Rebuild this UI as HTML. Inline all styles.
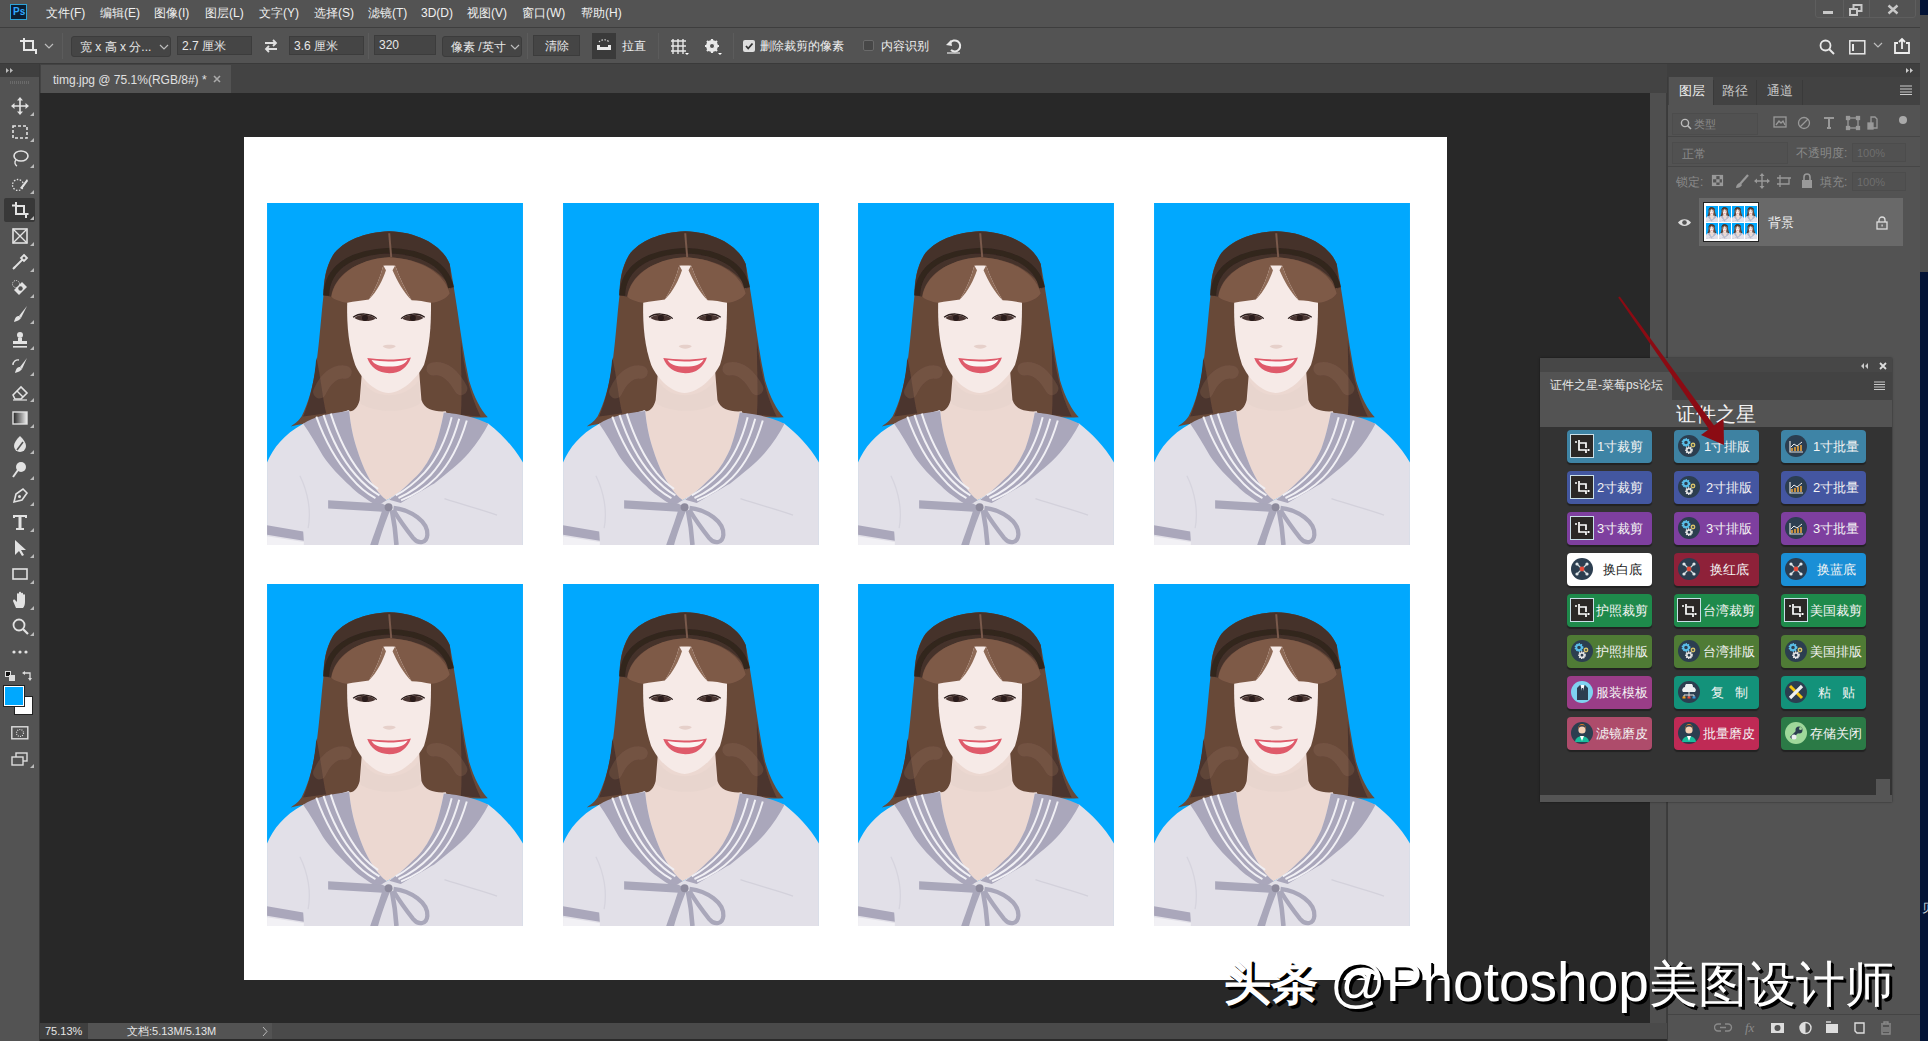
<!DOCTYPE html>
<html><head><meta charset="utf-8">
<style>
*{margin:0;padding:0;box-sizing:border-box}
html,body{width:1928px;height:1041px;overflow:hidden;background:#535353;font-family:"Liberation Sans",sans-serif;color:#e6e6e6;position:relative}
.a{position:absolute}
.t{position:absolute;white-space:nowrap;line-height:1}
#desk{left:1920px;top:0;width:8px;height:1041px;background:#041436}
#menubar{left:0;top:0;width:1920px;height:28px;background:#535353;border-bottom:1px solid #3e3e3e}
.mi{top:7px;font-size:12px;color:#f0f0f0}
#optbar{left:0;top:28px;width:1920px;height:36px;background:#535353;border-bottom:1px solid #3a3a3a}
.inp{position:absolute;background:#454545;border:1px solid #3c3c3c;font-size:12px;color:#e8e8e8;white-space:nowrap;line-height:18px;padding-left:4px}
.sep{position:absolute;top:33px;width:1px;height:26px;background:#484848;border-right:1px solid #5c5c5c}
#toolbar{left:0;top:64px;width:41px;height:977px;background:#535353;border-right:2px solid #3a3a3a}
#tabbar{left:40px;top:64px;width:1627px;height:29px;background:#434343}
#canvasbg{left:40px;top:93px;width:1610px;height:930px;background:#282828}
#gutter{left:1650px;top:93px;width:17px;height:930px;background:#4f4f4f;border-right:1px solid #3d3d3d}
#status{left:40px;top:1023px;width:1627px;height:18px;background:#4a4a4a;border-bottom:2px solid #2a2a2a}
#dock{left:1667px;top:64px;width:253px;height:977px;background:#535353;border-left:1px solid #3b3b3b}
#doc{left:244px;top:137px;width:1203px;height:843px;background:#fff}
.ph{position:absolute;width:256px;height:342px;overflow:hidden}
.ph svg{display:block}
.btn{position:absolute;width:85px;height:33px;border-radius:4px;box-shadow:0 2px 1px rgba(0,0,0,.35)}
.btn .ic{position:absolute;left:3px;top:4px;width:25px;height:25px;border-radius:50%;background:#2c3e50}
.btn .sq{position:absolute;left:3px;top:4px;width:24px;height:24px;background:#2b2826;border:1px solid #c9dfe8}
.btn .bt{position:absolute;top:10px;font-size:13px;color:#fff;white-space:nowrap;line-height:1}
.ticon{position:absolute;left:11px;width:18px;height:18px}
</style></head><body>
<svg width="0" height="0" style="position:absolute"><defs><symbol id="girl" viewBox="0 0 779 1041">
<filter id="sb" x="0" y="0" width="1" height="1"><feGaussianBlur stdDeviation="2.2"/></filter><rect width="779" height="1041" fill="#01a8fe"/><g filter="url(#sb)">
<path d="M370 86 C300 88 230 115 200 160 C178 195 172 240 172 280 C165 340 160 420 150 490 C140 560 125 610 105 650 C95 665 80 675 72 680 C120 670 200 655 262 640 L500 640 C560 650 620 655 672 652 C650 630 630 590 615 540 C600 470 590 400 580 330 C572 280 565 230 556 186 C535 130 460 88 370 86 Z" fill="#674839"/>
<path d="M150 470 C145 540 130 600 110 650 L180 640 C170 600 165 540 150 470 Z M590 420 C600 500 615 580 650 650 L590 645 C595 580 590 500 590 420 Z" fill="#4b342d"/>
<path d="M160 575 C180 530 210 510 238 515 M505 505 C535 500 565 520 590 565" fill="none" stroke="#98745f" stroke-width="40" stroke-linecap="round" opacity="0.25"/>
<path d="M372 86 C300 88 230 115 200 160 C180 195 172 240 172 280 L195 285 C205 225 260 175 372 165 C470 170 535 210 560 262 L562 250 C560 220 558 200 556 186 C535 130 460 88 372 86 Z" fill="#45332c"/>
<path d="M180 282 C183 200 250 150 372 145 C470 148 545 185 560 258" fill="none" stroke="#33251f" stroke-width="18"/>
<path d="M372 92 C374 120 376 140 378 165" fill="none" stroke="#7a5a4c" stroke-width="6"/>
<path d="M290 500 L462 500 L470 600 C480 630 510 636 545 634 C530 720 500 800 445 845 C420 870 395 890 364 905 C330 885 300 850 280 800 C262 740 250 680 245 630 C255 640 275 630 282 600 Z" fill="#ecd8d1"/><path d="M290 540 C320 600 420 600 462 540 L466 610 C420 640 330 640 284 610 Z" fill="#e8d5ce"/>
<path d="M244 300 C242 380 250 440 268 492 C290 540 330 575 370 578 C410 575 452 540 478 492 C494 440 500 380 499 300 C480 220 430 190 372 188 C310 190 262 220 244 300 Z" fill="#f6eae7"/>
<path d="M196 285 C205 225 270 170 372 165 C470 170 540 215 556 275 C548 290 525 302 499 304 C480 300 460 296 440 296 C420 262 402 225 390 190 L354 190 C345 225 330 262 310 294 C290 297 265 300 244 304 C225 300 205 295 196 285 Z" fill="#7e5a47"/>
<path d="M354 190 C345 225 330 262 310 294 C335 270 352 235 362 205 Z M390 190 C402 225 420 262 440 296 C415 272 395 235 382 205 Z" fill="#8e6a56"/>
<path d="M266 350 C280 338 312 336 330 352 C315 362 282 362 266 350 Z M412 352 C430 336 462 338 476 350 C460 362 428 362 412 352 Z" fill="#4a3530"/><circle cx="298" cy="350" r="9" fill="#2a1c1a"/><circle cx="444" cy="350" r="9" fill="#2a1c1a"/>
<path d="M262 348 C280 334 315 334 334 352 M408 352 C427 334 462 334 480 348" fill="none" stroke="#2a1c1a" stroke-width="4"/>
<path d="M352 436 C360 446 384 446 392 436 C385 430 360 430 352 436 Z" fill="#e6d0ca"/>
<path d="M305 472 C345 478 400 478 438 470 C428 500 405 518 372 518 C338 518 315 500 305 472 Z" fill="#df5a6a"/>
<path d="M318 478 C350 484 398 484 428 476 C420 492 402 498 372 498 C342 498 326 492 318 478 Z" fill="#fbf5f3"/>
<path d="M0 790 C20 745 50 705 110 672 L250 630 C255 680 262 727 297 811 C320 860 345 890 364 905 C400 885 420 865 445 841 C470 820 490 790 509 748 C520 720 530 680 538 636 L674 672 C710 700 750 740 779 790 L779 1041 L0 1041 Z" fill="#e2e0e8"/>
<path d="M110 672 C140 650 200 638 250 633 C255 680 262 727 297 811 C320 860 345 890 364 905 L335 922 C300 900 270 880 254 862 C220 830 190 800 170 769 C150 735 130 700 110 672 Z" fill="#aaa7bb"/>
<path d="M674 672 C640 655 590 642 538 638 C530 680 520 720 509 748 C490 790 470 820 445 841 C420 865 400 885 372 903 L407 913 C440 895 480 870 509 854 C550 820 590 790 614 761 C640 730 660 700 674 672 Z" fill="#aaa7bb"/>
<path d="M150 650 C175 720 215 790 255 835 C280 865 305 885 330 898 M172 645 C195 715 232 785 270 828 C295 857 318 876 342 890 M194 641 C216 710 250 778 285 822 C305 846 322 860 338 870" stroke="#f1f0f5" stroke-width="6" fill="none"/>
<path d="M562 652 C545 720 515 780 480 820 C450 852 420 875 392 890 M585 657 C566 725 535 788 498 828 C468 860 436 882 400 898 M608 662 C588 730 555 795 515 836 C485 866 450 888 408 905" stroke="#f1f0f5" stroke-width="6" fill="none"/>
<path d="M186 905 L350 915 L370 925 L352 940 L186 930 Z" fill="#a9a7ba"/>
<path d="M352 930 C340 970 325 1010 314 1041 L338 1041 C348 1005 362 965 375 935 Z" fill="#a9a7ba"/>
<path d="M385 928 C440 935 490 970 488 1010 C486 1035 462 1040 445 1020 C425 995 400 960 385 935" fill="none" stroke="#a9a7ba" stroke-width="13"/>
<path d="M380 935 C388 975 392 1010 394 1041" fill="none" stroke="#a9a7ba" stroke-width="14"/>
<circle cx="370" cy="926" r="12" fill="#8d8a9c"/>
<path d="M0 981 L110 1000 L112 1028 L0 1010 Z" fill="#aaa7bb"/>
<path d="M0 1014 L112 1032 L112 1041 L0 1041 Z" fill="#f2f1f5"/>
<path d="M540 900 C600 920 660 935 700 950" fill="none" stroke="#d3d1db" stroke-width="4"/>
<path d="M100 830 C125 880 135 940 125 990" fill="none" stroke="#d6d4de" stroke-width="4"/>
</g></symbol>
</defs></svg>
<div id="desk" class="a"></div><span class="t" style="left:1922px;top:902px;font-size:12px;color:#cfd8dc">贝</span>
<div class="a" style="left:1920px;top:15px;width:8px;height:257px;background:#4d4d4d"></div>
<div id="menubar" class="a">
<div class="a" style="left:10px;top:4px;width:17px;height:16px;background:#0b1f33;border:1px solid #2fa3d8"><span class="t" style="left:2px;top:2px;font-size:10px;color:#31a8ff;font-weight:bold">Ps</span></div>
<span class="t mi" style="left:46px">文件(F)</span>
<span class="t mi" style="left:100px">编辑(E)</span>
<span class="t mi" style="left:154px">图像(I)</span>
<span class="t mi" style="left:205px">图层(L)</span>
<span class="t mi" style="left:259px">文字(Y)</span>
<span class="t mi" style="left:314px">选择(S)</span>
<span class="t mi" style="left:368px">滤镜(T)</span>
<span class="t mi" style="left:421px">3D(D)</span>
<span class="t mi" style="left:467px">视图(V)</span>
<span class="t mi" style="left:522px">窗口(W)</span>
<span class="t mi" style="left:581px">帮助(H)</span>
<div class="a" style="left:1815px;top:-3px;width:101px;height:21px;border:1px solid #5e5e5e;border-radius:3px"></div>
<div class="a" style="left:1843px;top:0;width:1px;height:18px;background:#5e5e5e"></div><div class="a" style="left:1869px;top:0;width:1px;height:18px;background:#5e5e5e"></div>
<div class="a" style="left:1823px;top:11px;width:10px;height:3px;background:#c8c8c8"></div>
<svg class="a" style="left:1849px;top:4px" width="14" height="12"><rect x="4.5" y="1" width="8" height="6" fill="none" stroke="#c8c8c8" stroke-width="2"/><rect x="1" y="5" width="7" height="6" fill="#535353" stroke="#c8c8c8" stroke-width="2"/></svg>
<svg class="a" style="left:1887px;top:4px" width="12" height="11"><path d="M1.5 1.5L10.5 9.5M10.5 1.5L1.5 9.5" stroke="#c8c8c8" stroke-width="2.4"/></svg>
</div>
<div id="optbar" class="a">
<svg class="a" style="left:19px;top:9px" width="20" height="18"><path d="M1 4H4M5 1V13H17V17M5 4H14V13" fill="none" stroke="#e8e8e8" stroke-width="2"/></svg>
<svg class="a" style="left:44px;top:15px" width="10" height="6"><path d="M1 1L5 5L9 1" fill="none" stroke="#bdbdbd" stroke-width="1.2"/></svg>
<div class="sep" style="left:62px;top:5px"></div>
<div class="inp" style="left:71px;top:8px;width:100px;height:21px;border-radius:3px;padding-left:8px;line-height:20px">宽 x 高 x 分...</div>
<svg class="a" style="left:159px;top:16px" width="10" height="6"><path d="M1 1L5 5L9 1" fill="none" stroke="#bdbdbd" stroke-width="1.2"/></svg>
<div class="inp" style="left:177px;top:8px;width:75px;height:19px">2.7 厘米</div>
<svg class="a" style="left:263px;top:11px" width="16" height="14"><path d="M2 4H13M10 1L13 4L10 7M14 10H3M6 7L3 10L6 13" fill="none" stroke="#e0e0e0" stroke-width="1.8"/></svg>
<div class="inp" style="left:289px;top:8px;width:75px;height:19px">3.6 厘米</div>
<div class="sep" style="left:368px;top:5px"></div>
<div class="inp" style="left:374px;top:7px;width:62px;height:20px">320</div>
<div class="inp" style="left:442px;top:8px;width:80px;height:21px;border-radius:3px;padding-left:8px;line-height:21px">像素 /英寸</div>
<svg class="a" style="left:510px;top:16px" width="10" height="6"><path d="M1 1L5 5L9 1" fill="none" stroke="#bdbdbd" stroke-width="1.2"/></svg>
<div class="sep" style="left:527px;top:5px"></div>
<div class="inp" style="left:533px;top:7px;width:47px;height:21px;text-align:center;padding-left:0;line-height:20px">清除</div>
<div class="a" style="left:592px;top:5px;width:24px;height:26px;background:#3a3a3a"></div>
<svg class="a" style="left:595px;top:10px" width="18" height="14"><path d="M4 4A6 5 0 0 1 14 4" fill="none" stroke="#ddd" stroke-width="1.2" stroke-dasharray="1.5 1.5"/><path d="M2 7V12H16V7H13V9H5V7Z" fill="#e8e8e8"/></svg>
<span class="t" style="left:622px;top:12px;font-size:12px;color:#eee">拉直</span>
<div class="sep" style="left:658px;top:5px"></div>
<svg class="a" style="left:670px;top:10px" width="20" height="18"><path d="M3 1V16M8 1V16M13 1V16M1 3H16M1 8H16M1 13H16" stroke="#e8e8e8" stroke-width="1.4"/><path d="M15 15L19 15L17 17Z" fill="#fff"/></svg>
<svg class="a" style="left:704px;top:10px" width="20" height="18"><circle cx="8" cy="8" r="4.5" fill="none" stroke="#e8e8e8" stroke-width="3"/><path d="M8 1V15M1 8H15M3 3L13 13M13 3L3 13" stroke="#e8e8e8" stroke-width="2.2"/><circle cx="8" cy="8" r="2" fill="#535353"/><path d="M14 15L18 15L16 17Z" fill="#fff"/></svg>
<div class="sep" style="left:733px;top:5px"></div>
<div class="a" style="left:743px;top:12px;width:12px;height:12px;background:#dedede;border-radius:2px"></div>
<svg class="a" style="left:744px;top:13px" width="10" height="10"><path d="M2 5L4.2 7.5L8.5 2.5" fill="none" stroke="#333" stroke-width="1.8"/></svg>
<span class="t" style="left:760px;top:12px;font-size:12px;color:#eee">删除裁剪的像素</span>
<div class="a" style="left:863px;top:12px;width:11px;height:11px;background:#474747;border:1px solid #6a6a6a;border-radius:2px"></div>
<span class="t" style="left:881px;top:12px;font-size:12px;color:#eee">内容识别</span>
<svg class="a" style="left:945px;top:10px" width="18" height="17"><path d="M5 5A5.5 5.5 0 1 1 6 12" fill="none" stroke="#e8e8e8" stroke-width="2"/><path d="M1 7L6 2L7 8Z" fill="#e8e8e8"/><path d="M2 15H15" stroke="#e8e8e8" stroke-width="1.2"/></svg>
<svg class="a" style="left:1819px;top:11px" width="17" height="17"><circle cx="6.5" cy="6.5" r="5" fill="none" stroke="#e8e8e8" stroke-width="1.8"/><path d="M10 10L15 15" stroke="#e8e8e8" stroke-width="2"/></svg>
<svg class="a" style="left:1849px;top:12px" width="17" height="15"><rect x="0.8" y="0.8" width="15" height="13" fill="none" stroke="#e8e8e8" stroke-width="1.5"/><rect x="3" y="4" width="2" height="7" fill="#e8e8e8"/></svg>
<svg class="a" style="left:1873px;top:14px" width="10" height="6"><path d="M1 1L5 5L9 1" fill="none" stroke="#bdbdbd" stroke-width="1.2"/></svg>
<svg class="a" style="left:1893px;top:9px" width="18" height="18"><path d="M5 6H2V16H16V6H13" fill="none" stroke="#eee" stroke-width="1.8"/><path d="M9 12V2M6 5L9 2L12 5" fill="none" stroke="#eee" stroke-width="1.8"/></svg>
</div>
<div id="toolbar" class="a">
<div class="a" style="left:0;top:0;width:39px;height:13px;background:#3f3f3f"></div>
<svg class="a" style="left:5px;top:3px" width="10" height="7"><path d="M1 1L4 3.5L1 6ZM5 1L8 3.5L5 6Z" fill="#bbb"/></svg>
<div class="a" style="left:10px;top:17px;width:19px;height:3px;background:repeating-linear-gradient(90deg,#6a6a6a 0 1px,transparent 1px 2px)"></div>
<div class="a" style="left:4px;top:134px;width:31px;height:24px;background:#383838;border-radius:2px"></div>
<svg class="a" style="left:11px;top:33px" width="18" height="18"><path d="M9 1V17M1 9H17" stroke="#e2e2e2" stroke-width="1.6"/><path d="M9 0L6 3.5H12ZM9 18L6 14.5H12ZM0 9L3.5 6V12ZM18 9L14.5 6V12Z" fill="#e2e2e2"/></svg><svg class="a" style="left:30px;top:48px" width="4" height="4"><path d="M4 0V4H0Z" fill="#bbb"/></svg><svg class="a" style="left:11px;top:59px" width="18" height="18"><rect x="2" y="3" width="14" height="12" fill="none" stroke="#e2e2e2" stroke-width="1.6" stroke-dasharray="3 2"/></svg><svg class="a" style="left:30px;top:74px" width="4" height="4"><path d="M4 0V4H0Z" fill="#bbb"/></svg><svg class="a" style="left:11px;top:85px" width="18" height="18"><ellipse cx="10" cy="7" rx="7" ry="5" fill="none" stroke="#e2e2e2" stroke-width="1.6"/><path d="M5 11C3 13 4 16 6 17" fill="none" stroke="#e2e2e2" stroke-width="1.4"/></svg><svg class="a" style="left:30px;top:100px" width="4" height="4"><path d="M4 0V4H0Z" fill="#bbb"/></svg><svg class="a" style="left:11px;top:111px" width="18" height="18"><circle cx="7" cy="10" r="5.5" fill="none" stroke="#e2e2e2" stroke-width="1.3" stroke-dasharray="1.5 1.5"/><path d="M9 13L16 4L17 6L11 14Z" fill="#e2e2e2"/></svg><svg class="a" style="left:30px;top:126px" width="4" height="4"><path d="M4 0V4H0Z" fill="#bbb"/></svg><svg class="a" style="left:11px;top:137px" width="18" height="18"><path d="M1 4.5H4M5 1V13H15V17M5 5H13V13" fill="none" stroke="#e2e2e2" stroke-width="2"/><rect x="15.5" y="12" width="2" height="2" fill="#e2e2e2"/></svg><svg class="a" style="left:30px;top:152px" width="4" height="4"><path d="M4 0V4H0Z" fill="#bbb"/></svg><svg class="a" style="left:11px;top:163px" width="18" height="18"><rect x="2" y="2" width="14" height="14" fill="none" stroke="#e2e2e2" stroke-width="1.6"/><path d="M2 2L16 16M16 2L2 16" stroke="#e2e2e2" stroke-width="1.4"/></svg><svg class="a" style="left:30px;top:178px" width="4" height="4"><path d="M4 0V4H0Z" fill="#bbb"/></svg><svg class="a" style="left:11px;top:189px" width="18" height="18"><path d="M3 15L11 7M13 2L16 5L13 8L10 5Z" fill="none" stroke="#e2e2e2" stroke-width="1.8"/><path d="M2 16L4 14" stroke="#e2e2e2" stroke-width="2"/></svg><svg class="a" style="left:30px;top:204px" width="4" height="4"><path d="M4 0V4H0Z" fill="#bbb"/></svg><svg class="a" style="left:11px;top:215px" width="18" height="18"><path d="M3 11L11 3L16 8L8 16Z" fill="#e2e2e2"/><circle cx="9.5" cy="9.5" r="2.2" fill="#535353"/><circle cx="5" cy="5" r="3.5" fill="none" stroke="#e2e2e2" stroke-width="1" stroke-dasharray="1 1"/></svg><svg class="a" style="left:30px;top:230px" width="4" height="4"><path d="M4 0V4H0Z" fill="#bbb"/></svg><svg class="a" style="left:11px;top:241px" width="18" height="18"><path d="M16 1L8 11L10 13Z" fill="#e2e2e2"/><path d="M8 11C5 11 4 13 3 17C6 16 9 15 10 13Z" fill="#e2e2e2"/></svg><svg class="a" style="left:30px;top:256px" width="4" height="4"><path d="M4 0V4H0Z" fill="#bbb"/></svg><svg class="a" style="left:11px;top:267px" width="18" height="18"><circle cx="9" cy="4" r="3" fill="#e2e2e2"/><path d="M7 7H11V10H16V13H2V10H7Z" fill="#e2e2e2"/><rect x="2" y="15" width="14" height="1.6" fill="#e2e2e2"/></svg><svg class="a" style="left:30px;top:282px" width="4" height="4"><path d="M4 0V4H0Z" fill="#bbb"/></svg><svg class="a" style="left:11px;top:293px" width="18" height="18"><path d="M16 1L9 10L11 12Z" fill="#e2e2e2"/><path d="M9 10C6 10 5 12 4 16C7 15 10 14 11 12Z" fill="#e2e2e2"/><path d="M2 8A5 5 0 0 1 8 3" fill="none" stroke="#e2e2e2" stroke-width="1.4"/></svg><svg class="a" style="left:30px;top:308px" width="4" height="4"><path d="M4 0V4H0Z" fill="#bbb"/></svg><svg class="a" style="left:11px;top:319px" width="18" height="18"><path d="M2 12L10 4L16 10L10 16H4Z" fill="none" stroke="#e2e2e2" stroke-width="1.6"/><path d="M6 8L12 14" stroke="#e2e2e2" stroke-width="1.4"/><path d="M2 17H16" stroke="#e2e2e2" stroke-width="1.2"/></svg><svg class="a" style="left:30px;top:334px" width="4" height="4"><path d="M4 0V4H0Z" fill="#bbb"/></svg><svg class="a" style="left:11px;top:345px" width="18" height="18"><defs><linearGradient id="gr"><stop offset="0" stop-color="#222"/><stop offset="1" stop-color="#eee"/></linearGradient></defs><rect x="2" y="3" width="14" height="12" fill="url(#gr)" stroke="#e2e2e2" stroke-width="1.4"/></svg><svg class="a" style="left:30px;top:360px" width="4" height="4"><path d="M4 0V4H0Z" fill="#bbb"/></svg><svg class="a" style="left:11px;top:371px" width="18" height="18"><path d="M9 1C5 5 3 8 3 11A6 6 0 0 0 15 11C15 8 13 5 9 1Z" fill="#e2e2e2"/><path d="M6 15L12 7" stroke="#535353" stroke-width="1.5"/></svg><svg class="a" style="left:30px;top:386px" width="4" height="4"><path d="M4 0V4H0Z" fill="#bbb"/></svg><svg class="a" style="left:11px;top:397px" width="18" height="18"><circle cx="10" cy="6" r="5" fill="#e2e2e2"/><path d="M7 9L2 16" stroke="#e2e2e2" stroke-width="2"/></svg><svg class="a" style="left:30px;top:412px" width="4" height="4"><path d="M4 0V4H0Z" fill="#bbb"/></svg><svg class="a" style="left:11px;top:423px" width="18" height="18"><path d="M3 15L5 7L12 2L16 6L11 13Z" fill="none" stroke="#e2e2e2" stroke-width="1.6"/><circle cx="8.5" cy="9.5" r="1.5" fill="#e2e2e2"/></svg><svg class="a" style="left:30px;top:438px" width="4" height="4"><path d="M4 0V4H0Z" fill="#bbb"/></svg><svg class="a" style="left:11px;top:449px" width="18" height="18"><path d="M2 2H16V5H14V4H10.5V15H13V17H5V15H7.5V4H4V5H2Z" fill="#e2e2e2"/></svg><svg class="a" style="left:30px;top:464px" width="4" height="4"><path d="M4 0V4H0Z" fill="#bbb"/></svg><svg class="a" style="left:11px;top:475px" width="18" height="18"><path d="M4 1V16L8 12L11 17L13 16L10 11H15Z" fill="#e2e2e2"/></svg><svg class="a" style="left:30px;top:490px" width="4" height="4"><path d="M4 0V4H0Z" fill="#bbb"/></svg><svg class="a" style="left:11px;top:501px" width="18" height="18"><rect x="2" y="4" width="14" height="10" fill="none" stroke="#e2e2e2" stroke-width="1.6"/></svg><svg class="a" style="left:30px;top:516px" width="4" height="4"><path d="M4 0V4H0Z" fill="#bbb"/></svg><svg class="a" style="left:11px;top:527px" width="18" height="18"><path d="M5 17L2 10C2 9 3 8 4 9L6 11V3C6 2 8 2 8 3V8V1.5C8 0.5 10 0.5 10 1.5V8V2.5C10 1.5 12 1.5 12 2.5V8V4C12 3 14 3 14 4V11C14 14 13 16 12 17Z" fill="#e2e2e2"/></svg><svg class="a" style="left:30px;top:542px" width="4" height="4"><path d="M4 0V4H0Z" fill="#bbb"/></svg><svg class="a" style="left:11px;top:553px" width="18" height="18"><circle cx="8" cy="8" r="5.5" fill="none" stroke="#e2e2e2" stroke-width="1.8"/><path d="M12 12L17 17" stroke="#e2e2e2" stroke-width="2.2"/></svg><svg class="a" style="left:30px;top:568px" width="4" height="4"><path d="M4 0V4H0Z" fill="#bbb"/></svg><svg class="a" style="left:11px;top:579px" width="18" height="18"><circle cx="3" cy="9" r="1.6" fill="#e2e2e2"/><circle cx="9" cy="9" r="1.6" fill="#e2e2e2"/><circle cx="15" cy="9" r="1.6" fill="#e2e2e2"/></svg><div class="a" style="left:5px;top:607px;width:6px;height:6px;background:#111;border:1px solid #ddd"></div><div class="a" style="left:9px;top:611px;width:6px;height:6px;background:#ddd"></div><svg class="a" style="left:22px;top:607px" width="10" height="10"><path d="M2 2H8V8" fill="none" stroke="#ddd" stroke-width="1.3"/><path d="M0 2L3 0V4ZM8 10L6 7H10Z" fill="#ddd"/></svg><div class="a" style="left:14px;top:632px;width:19px;height:19px;background:#fff;border:1px solid #222"></div><div class="a" style="left:4px;top:622px;width:20px;height:20px;background:#00a8fe;border:1px solid #fff;outline:1px solid #222"></div><svg class="a" style="left:11px;top:662px" width="18" height="14"><rect x="0.8" y="0.8" width="16" height="12" fill="none" stroke="#ddd" stroke-width="1.4"/><circle cx="9" cy="7" r="3.5" fill="none" stroke="#ddd" stroke-width="1.2" stroke-dasharray="1 1.2"/></svg><svg class="a" style="left:11px;top:688px" width="18" height="15"><rect x="5" y="1" width="11" height="8" fill="none" stroke="#ddd" stroke-width="1.4"/><rect x="1" y="5" width="11" height="8" fill="#535353" stroke="#ddd" stroke-width="1.4"/></svg><svg class="a" style="left:30px;top:700px" width="4" height="4"><path d="M4 0V4H0Z" fill="#bbb"/></svg>
</div>
<div id="tabbar" class="a">
<div class="a" style="left:1px;top:1px;width:190px;height:28px;background:#535353"></div>
<span class="t" style="left:13px;top:10px;font-size:12px;color:#e0e0e0">timg.jpg @ 75.1%(RGB/8#) *</span>
<svg class="a" style="left:173px;top:11px" width="8" height="8"><path d="M1 1L7 7M7 1L1 7" stroke="#aaa" stroke-width="1.6"/></svg>
</div>
<div id="canvasbg" class="a"></div>
<div id="gutter" class="a"></div>
<div id="status" class="a">
<div class="a" style="left:0;top:0;width:48px;height:16px;background:#3f3f3f"></div><div class="a" style="left:48px;top:0;width:184px;height:16px;background:#535353"></div>
<span class="t" style="left:5px;top:3px;font-size:11px;color:#e6e6e6">75.13%</span>
<span class="t" style="left:87px;top:3px;font-size:11px;color:#e6e6e6">文档:5.13M/5.13M</span>
<svg class="a" style="left:222px;top:3px" width="6" height="11"><path d="M1 1L5 5.5L1 10" fill="none" stroke="#bbb" stroke-width="1"/></svg>
</div>
<div id="dock" class="a"></div>
<div class="a" style="left:1667px;top:64px;width:253px;height:13px;background:#3f3f3f"></div>
<svg class="a" style="left:1905px;top:67px" width="10" height="7"><path d="M1 1L4 3.5L1 6ZM5 1L8 3.5L5 6Z" fill="#ccc"/></svg>
<div class="a" style="left:1668px;top:77px;width:252px;height:28px;background:#424242"></div>
<div class="a" style="left:1669px;top:77px;width:44px;height:28px;background:#535353"></div>
<div class="a" style="left:1713px;top:80px;width:1px;height:25px;background:#3a3a3a"></div><div class="a" style="left:1756px;top:80px;width:1px;height:25px;background:#3a3a3a"></div><div class="a" style="left:1802px;top:80px;width:1px;height:25px;background:#3a3a3a"></div>
<span class="t" style="left:1679px;top:84px;font-size:13px;color:#f0f0f0">图层</span>
<span class="t" style="left:1722px;top:84px;font-size:13px;color:#c8c8c8">路径</span>
<span class="t" style="left:1767px;top:84px;font-size:13px;color:#c8c8c8">通道</span>
<svg class="a" style="left:1900px;top:85px" width="12" height="10"><path d="M0 1H12M0 4H12M0 7H12M0 9.5H12" stroke="#ccc" stroke-width="1"/></svg>
<div class="a" style="left:1668px;top:136px;width:252px;height:1px;background:#464646"></div>
<div class="a" style="left:1672px;top:113px;width:86px;height:22px;border:1px solid #4c4c4c;background:#515151"></div>
<svg class="a" style="left:1680px;top:118px" width="12" height="12"><circle cx="5" cy="5" r="3.6" fill="none" stroke="#bbb" stroke-width="1.4"/><path d="M7.5 7.5L11 11" stroke="#bbb" stroke-width="1.6"/></svg>
<span class="t" style="left:1694px;top:119px;font-size:11px;color:#8a8a8a">类型</span>
<svg class="a" style="left:1773px;top:115px" width="140" height="17" fill="none" stroke="#999" stroke-width="1.3"><rect x="1" y="2" width="12" height="10"/><path d="M3 10L6 6L8 8L10 6L12 10" /><circle cx="31" cy="8" r="5.5"/><path d="M35 4L27 12" stroke="#999" stroke-width="1.3"/><path d="M51 3H61M56 3V13M54 13H58" stroke-width="2"/><rect x="75" y="3" width="10" height="10"/><rect x="73.5" y="1.5" width="3" height="3" fill="#999"/><rect x="83.5" y="1.5" width="3" height="3" fill="#999"/><rect x="73.5" y="11.5" width="3" height="3" fill="#999"/><rect x="83.5" y="11.5" width="3" height="3" fill="#999"/><path d="M98 2H102L104 4V13H98Z"/><rect x="95" y="8" width="5" height="6" fill="#999"/><circle cx="130" cy="5" r="4" fill="#aaa" stroke="none"/></svg>
<div class="a" style="left:1668px;top:166px;width:252px;height:1px;background:#464646"></div>
<div class="a" style="left:1672px;top:142px;width:116px;height:22px;border:1px solid #4c4c4c;background:#515151"></div>
<span class="t" style="left:1682px;top:148px;font-size:12px;color:#8a8a8a">正常</span>
<span class="t" style="left:1796px;top:147px;font-size:12px;color:#8a8a8a">不透明度:</span>
<div class="a" style="left:1852px;top:143px;width:54px;height:19px;border:1px solid #4c4c4c;background:#515151"></div>
<span class="t" style="left:1857px;top:148px;font-size:11px;color:#6e6e6e">100%</span>
<span class="t" style="left:1676px;top:176px;font-size:12px;color:#8a8a8a">锁定:</span>
<svg class="a" style="left:1711px;top:173px" width="105" height="16" fill="#999"><rect x="1.5" y="2.5" width="10" height="10" fill="none" stroke="#999" stroke-width="1.2"/><path d="M2 3H5.3V6.3H2ZM8.6 3H11V6.3H8.6ZM5.3 6.3H8.6V9.6H5.3ZM2 9.6H5.3V12H2ZM8.6 9.6H11V12H8.6Z" fill="#999"/><path d="M29 11L37 2" stroke="#999" stroke-width="2.2"/><path d="M25 15C25 12 27 10 29 10L31 12C30 14 28 15 25 15Z" fill="#999"/><path d="M51 2V14M45 8H57" stroke="#999" stroke-width="1.4"/><path d="M51 0L48.5 3H53.5ZM51 16L48.5 13H53.5ZM43 8L46 5.5V10.5ZM59 8L56 5.5V10.5Z" fill="#999"/><path d="M66 5H80M69 2V14M66 11H78V5" fill="none" stroke="#999" stroke-width="1.3"/><rect x="91" y="7" width="10" height="8"/><path d="M93 7V4A3 3 0 0 1 99 4V7" fill="none" stroke="#999" stroke-width="1.6"/></svg>
<span class="t" style="left:1820px;top:176px;font-size:12px;color:#8a8a8a">填充:</span>
<div class="a" style="left:1852px;top:172px;width:54px;height:19px;border:1px solid #4c4c4c;background:#515151"></div>
<span class="t" style="left:1857px;top:177px;font-size:11px;color:#6e6e6e">100%</span>
<div class="a" style="left:1668px;top:197px;width:252px;height:49px;background:#535353"></div>
<div class="a" style="left:1699px;top:198px;width:204px;height:48px;background:#696969"></div>
<svg class="a" style="left:1677px;top:217px" width="15" height="11"><path d="M1 5.5C4 1 11 1 14 5.5C11 10 4 10 1 5.5Z" fill="#ddd"/><circle cx="7.5" cy="5.5" r="2.3" fill="#535353"/></svg>
<div class="a" style="left:1703px;top:202px;width:56px;height:40px;background:#fff;border:1px solid #222"></div>
<svg class="a" style="left:1706px;top:206px" width="12" height="16" viewBox="0 0 779 1041" preserveAspectRatio="none"><use href="#girl"/></svg><svg class="a" style="left:1719px;top:206px" width="12" height="16" viewBox="0 0 779 1041" preserveAspectRatio="none"><use href="#girl"/></svg><svg class="a" style="left:1732px;top:206px" width="12" height="16" viewBox="0 0 779 1041" preserveAspectRatio="none"><use href="#girl"/></svg><svg class="a" style="left:1745px;top:206px" width="12" height="16" viewBox="0 0 779 1041" preserveAspectRatio="none"><use href="#girl"/></svg><svg class="a" style="left:1706px;top:223px" width="12" height="16" viewBox="0 0 779 1041" preserveAspectRatio="none"><use href="#girl"/></svg><svg class="a" style="left:1719px;top:223px" width="12" height="16" viewBox="0 0 779 1041" preserveAspectRatio="none"><use href="#girl"/></svg><svg class="a" style="left:1732px;top:223px" width="12" height="16" viewBox="0 0 779 1041" preserveAspectRatio="none"><use href="#girl"/></svg><svg class="a" style="left:1745px;top:223px" width="12" height="16" viewBox="0 0 779 1041" preserveAspectRatio="none"><use href="#girl"/></svg>
<span class="t" style="left:1768px;top:216px;font-size:13px;color:#f0f0f0">背景</span>
<svg class="a" style="left:1876px;top:216px" width="12" height="14"><rect x="1" y="6" width="10" height="7" fill="none" stroke="#ddd" stroke-width="1.3"/><path d="M3 6V4A3 3 0 0 1 9 4V6" fill="none" stroke="#ddd" stroke-width="1.3"/><rect x="5.5" y="8.5" width="1.2" height="2" fill="#ddd"/></svg>
<div class="a" style="left:1668px;top:1014px;width:252px;height:1px;background:#444"></div>
<svg class="a" style="left:1714px;top:1019px" width="185" height="18" fill="none" stroke="#8a8a8a" stroke-width="1.4"><path d="M7 5H4A3.5 3.5 0 0 0 4 12H7M11 5H14A3.5 3.5 0 0 1 14 12H11M6 8.5H12"/><text x="31" y="13" font-family="Liberation Serif" font-style="italic" font-size="13" fill="#8a8a8a" stroke="none">fx</text><rect x="57" y="4" width="13" height="10" fill="#ddd" stroke="none"/><circle cx="63.5" cy="9" r="3" fill="#535353" stroke="none"/><circle cx="91.5" cy="9" r="5.5" stroke="#ddd"/><path d="M91.5 3.5A5.5 5.5 0 0 0 91.5 14.5Z" fill="#ddd" stroke="none"/><path d="M112 5H124V14H112Z" fill="#ddd" stroke="none"/><path d="M112 3H117" stroke="#ddd"/><path d="M141 4H150V14H143L141 12Z" stroke="#ddd"/><path d="M167 5H177M168 6V15H176V6M170 8V13M172 8V13M174 8V13M170 5V3H174V5"/></svg>
<div id="doc" class="a"></div>
<div class="ph" style="left:267px;top:203px"><svg width="256" height="342"><use href="#girl"/></svg></div>
<div class="ph" style="left:563px;top:203px"><svg width="256" height="342"><use href="#girl"/></svg></div>
<div class="ph" style="left:858px;top:203px"><svg width="256" height="342"><use href="#girl"/></svg></div>
<div class="ph" style="left:1154px;top:203px"><svg width="256" height="342"><use href="#girl"/></svg></div>
<div class="ph" style="left:267px;top:584px"><svg width="256" height="342"><use href="#girl"/></svg></div>
<div class="ph" style="left:563px;top:584px"><svg width="256" height="342"><use href="#girl"/></svg></div>
<div class="ph" style="left:858px;top:584px"><svg width="256" height="342"><use href="#girl"/></svg></div>
<div class="ph" style="left:1154px;top:584px"><svg width="256" height="342"><use href="#girl"/></svg></div>
<div class="a" style="left:1540px;top:358px;width:352px;height:444px;background:#333333;box-shadow:0 0 2px rgba(0,0,0,.5)"></div>
<div class="a" style="left:1540px;top:358px;width:352px;height:14px;background:#474747"></div>
<svg class="a" style="left:1860px;top:362px" width="30" height="9"><path d="M4 1L1 4L4 7ZM8 1L5 4L8 7Z" fill="#ccc"/><path d="M20 1L26 7M26 1L20 7" stroke="#ddd" stroke-width="1.8"/></svg>
<div class="a" style="left:1540px;top:372px;width:352px;height:28px;background:#434343"></div>
<div class="a" style="left:1540px;top:372px;width:132px;height:28px;background:#535353"></div>
<span class="t" style="left:1550px;top:379px;font-size:12px;color:#e8e8e8">证件之星-菜莓ps论坛</span>
<svg class="a" style="left:1874px;top:381px" width="11" height="9"><path d="M0 1H11M0 3.5H11M0 6H11M0 8.5H11" stroke="#ccc" stroke-width="1"/></svg>
<div class="a" style="left:1540px;top:400px;width:352px;height:27px;background:#535353"></div>
<span class="t" style="left:1676px;top:404px;font-size:20px;color:#f2f2f2">证件之星</span>
<div class="a" style="left:1876px;top:779px;width:14px;height:16px;background:#555"></div>
<div class="a" style="left:1540px;top:795px;width:352px;height:7px;background:#555555"></div>
<div class="btn" style="left:1567px;top:430px;background:#3e84a5"><div class="sq"></div><svg class="a" style="left:7px;top:9px" width="17" height="16"><path d="M1 3H3M5 1V11H12V14M6 4H12V9" fill="none" stroke="#fff" stroke-width="1.7"/><rect x="13.5" y="10" width="2" height="2" fill="#fff"/></svg><span class="bt" style="left:30px;color:#f4f4f4">1寸裁剪</span></div>
<div class="btn" style="left:1674px;top:430px;background:#3e82a2"><div class="ic" style="left:4px;top:5px;width:22px;height:22px"></div><svg class="a" style="left:5px;top:6px" width="20" height="20"><circle cx="7" cy="6.5" r="3.6" fill="none" stroke="#5bc0eb" stroke-width="1.6" stroke-dasharray="1.4 0.9"/><circle cx="7" cy="6.5" r="2.6" fill="none" stroke="#5bc0eb" stroke-width="1.6"/><circle cx="14" cy="9" r="2.4" fill="#d8c36a"/><circle cx="14" cy="9" r="1" fill="#2c3e50"/><circle cx="10" cy="14.2" r="3.1" fill="none" stroke="#e8e8e8" stroke-width="1.5" stroke-dasharray="1.3 0.9"/><circle cx="10" cy="14.2" r="2.2" fill="none" stroke="#e8e8e8" stroke-width="1.5"/></svg><span class="bt" style="left:30px;color:#f4f4f4">1寸排版</span></div>
<div class="btn" style="left:1781px;top:430px;background:#3e84a6"><div class="ic" style="left:4px;top:5px;width:22px;height:22px"></div><svg class="a" style="left:8px;top:10px" width="15" height="13"><path d="M1 1V12H14" fill="none" stroke="#ddd" stroke-width="1.2"/><path d="M3 11V8M6 11V7M9 11V6M12 11V5" stroke="#e9a23b" stroke-width="1.6"/><path d="M2 7L5 4L8 6L13 2" fill="none" stroke="#eee" stroke-width="1"/></svg><span class="bt" style="left:32px;color:#f4f4f4">1寸批量</span></div>
<div class="btn" style="left:1567px;top:471px;background:#4357a0"><div class="sq"></div><svg class="a" style="left:7px;top:9px" width="17" height="16"><path d="M1 3H3M5 1V11H12V14M6 4H12V9" fill="none" stroke="#fff" stroke-width="1.7"/><rect x="13.5" y="10" width="2" height="2" fill="#fff"/></svg><span class="bt" style="left:30px;color:#f4f4f4">2寸裁剪</span></div>
<div class="btn" style="left:1674px;top:471px;background:#4456a1"><div class="ic" style="left:4px;top:5px;width:22px;height:22px"></div><svg class="a" style="left:5px;top:6px" width="20" height="20"><circle cx="7" cy="6.5" r="3.6" fill="none" stroke="#5bc0eb" stroke-width="1.6" stroke-dasharray="1.4 0.9"/><circle cx="7" cy="6.5" r="2.6" fill="none" stroke="#5bc0eb" stroke-width="1.6"/><circle cx="14" cy="9" r="2.4" fill="#d8c36a"/><circle cx="14" cy="9" r="1" fill="#2c3e50"/><circle cx="10" cy="14.2" r="3.1" fill="none" stroke="#e8e8e8" stroke-width="1.5" stroke-dasharray="1.3 0.9"/><circle cx="10" cy="14.2" r="2.2" fill="none" stroke="#e8e8e8" stroke-width="1.5"/></svg><span class="bt" style="left:32px;color:#f4f4f4">2寸排版</span></div>
<div class="btn" style="left:1781px;top:471px;background:#4456a1"><div class="ic" style="left:4px;top:5px;width:22px;height:22px"></div><svg class="a" style="left:8px;top:10px" width="15" height="13"><path d="M1 1V12H14" fill="none" stroke="#ddd" stroke-width="1.2"/><path d="M3 11V8M6 11V7M9 11V6M12 11V5" stroke="#e9a23b" stroke-width="1.6"/><path d="M2 7L5 4L8 6L13 2" fill="none" stroke="#eee" stroke-width="1"/></svg><span class="bt" style="left:32px;color:#f4f4f4">2寸批量</span></div>
<div class="btn" style="left:1567px;top:512px;background:#7e3f9f"><div class="sq"></div><svg class="a" style="left:7px;top:9px" width="17" height="16"><path d="M1 3H3M5 1V11H12V14M6 4H12V9" fill="none" stroke="#fff" stroke-width="1.7"/><rect x="13.5" y="10" width="2" height="2" fill="#fff"/></svg><span class="bt" style="left:30px;color:#f4f4f4">3寸裁剪</span></div>
<div class="btn" style="left:1674px;top:512px;background:#7e3f9f"><div class="ic" style="left:4px;top:5px;width:22px;height:22px"></div><svg class="a" style="left:5px;top:6px" width="20" height="20"><circle cx="7" cy="6.5" r="3.6" fill="none" stroke="#5bc0eb" stroke-width="1.6" stroke-dasharray="1.4 0.9"/><circle cx="7" cy="6.5" r="2.6" fill="none" stroke="#5bc0eb" stroke-width="1.6"/><circle cx="14" cy="9" r="2.4" fill="#d8c36a"/><circle cx="14" cy="9" r="1" fill="#2c3e50"/><circle cx="10" cy="14.2" r="3.1" fill="none" stroke="#e8e8e8" stroke-width="1.5" stroke-dasharray="1.3 0.9"/><circle cx="10" cy="14.2" r="2.2" fill="none" stroke="#e8e8e8" stroke-width="1.5"/></svg><span class="bt" style="left:32px;color:#f4f4f4">3寸排版</span></div>
<div class="btn" style="left:1781px;top:512px;background:#7e3f9f"><div class="ic" style="left:4px;top:5px;width:22px;height:22px"></div><svg class="a" style="left:8px;top:10px" width="15" height="13"><path d="M1 1V12H14" fill="none" stroke="#ddd" stroke-width="1.2"/><path d="M3 11V8M6 11V7M9 11V6M12 11V5" stroke="#e9a23b" stroke-width="1.6"/><path d="M2 7L5 4L8 6L13 2" fill="none" stroke="#eee" stroke-width="1"/></svg><span class="bt" style="left:32px;color:#f4f4f4">3寸批量</span></div>
<div class="btn" style="left:1567px;top:553px;background:#ffffff"><div class="ic" style="left:4px;top:5px;width:22px;height:22px"></div><svg class="a" style="left:6px;top:7px" width="18" height="18"><path d="M9 9L4 4M9 9L14 4M9 9L4 14M9 9L14 14" stroke="#cfd8dc" stroke-width="1.2"/><circle cx="4" cy="4" r="1.6" fill="#dfe6e9"/><circle cx="14" cy="4" r="1.6" fill="#dfe6e9"/><circle cx="4" cy="14" r="1.6" fill="#dfe6e9"/><circle cx="14" cy="14" r="1.6" fill="#dfe6e9"/><circle cx="9" cy="9" r="2.4" fill="#e74c3c"/></svg><span class="bt" style="left:36px;color:#222">换白底</span></div>
<div class="btn" style="left:1674px;top:553px;background:#8e2139"><div class="ic" style="left:4px;top:5px;width:22px;height:22px"></div><svg class="a" style="left:6px;top:7px" width="18" height="18"><path d="M9 9L4 4M9 9L14 4M9 9L4 14M9 9L14 14" stroke="#cfd8dc" stroke-width="1.2"/><circle cx="4" cy="4" r="1.6" fill="#dfe6e9"/><circle cx="14" cy="4" r="1.6" fill="#dfe6e9"/><circle cx="4" cy="14" r="1.6" fill="#dfe6e9"/><circle cx="14" cy="14" r="1.6" fill="#dfe6e9"/><circle cx="9" cy="9" r="2.4" fill="#e74c3c"/></svg><span class="bt" style="left:36px;color:#f4f4f4">换红底</span></div>
<div class="btn" style="left:1781px;top:553px;background:#1a8fd6"><div class="ic" style="left:4px;top:5px;width:22px;height:22px"></div><svg class="a" style="left:6px;top:7px" width="18" height="18"><path d="M9 9L4 4M9 9L14 4M9 9L4 14M9 9L14 14" stroke="#cfd8dc" stroke-width="1.2"/><circle cx="4" cy="4" r="1.6" fill="#dfe6e9"/><circle cx="14" cy="4" r="1.6" fill="#dfe6e9"/><circle cx="4" cy="14" r="1.6" fill="#dfe6e9"/><circle cx="14" cy="14" r="1.6" fill="#dfe6e9"/><circle cx="9" cy="9" r="2.4" fill="#e74c3c"/></svg><span class="bt" style="left:36px;color:#f4f4f4">换蓝底</span></div>
<div class="btn" style="left:1567px;top:594px;background:#1e8a4b"><div class="sq"></div><svg class="a" style="left:7px;top:9px" width="17" height="16"><path d="M1 3H3M5 1V11H12V14M6 4H12V9" fill="none" stroke="#fff" stroke-width="1.7"/><rect x="13.5" y="10" width="2" height="2" fill="#fff"/></svg><span class="bt" style="left:29px;color:#f4f4f4">护照裁剪</span></div>
<div class="btn" style="left:1674px;top:594px;background:#1e8a4b"><div class="sq"></div><svg class="a" style="left:7px;top:9px" width="17" height="16"><path d="M1 3H3M5 1V11H12V14M6 4H12V9" fill="none" stroke="#fff" stroke-width="1.7"/><rect x="13.5" y="10" width="2" height="2" fill="#fff"/></svg><span class="bt" style="left:29px;color:#f4f4f4">台湾裁剪</span></div>
<div class="btn" style="left:1781px;top:594px;background:#1e8a4b"><div class="sq"></div><svg class="a" style="left:7px;top:9px" width="17" height="16"><path d="M1 3H3M5 1V11H12V14M6 4H12V9" fill="none" stroke="#fff" stroke-width="1.7"/><rect x="13.5" y="10" width="2" height="2" fill="#fff"/></svg><span class="bt" style="left:29px;color:#f4f4f4">美国裁剪</span></div>
<div class="btn" style="left:1567px;top:635px;background:#4f7b35"><div class="ic" style="left:4px;top:5px;width:22px;height:22px"></div><svg class="a" style="left:5px;top:6px" width="20" height="20"><circle cx="7" cy="6.5" r="3.6" fill="none" stroke="#5bc0eb" stroke-width="1.6" stroke-dasharray="1.4 0.9"/><circle cx="7" cy="6.5" r="2.6" fill="none" stroke="#5bc0eb" stroke-width="1.6"/><circle cx="14" cy="9" r="2.4" fill="#d8c36a"/><circle cx="14" cy="9" r="1" fill="#2c3e50"/><circle cx="10" cy="14.2" r="3.1" fill="none" stroke="#e8e8e8" stroke-width="1.5" stroke-dasharray="1.3 0.9"/><circle cx="10" cy="14.2" r="2.2" fill="none" stroke="#e8e8e8" stroke-width="1.5"/></svg><span class="bt" style="left:29px;color:#f4f4f4">护照排版</span></div>
<div class="btn" style="left:1674px;top:635px;background:#4f7b35"><div class="ic" style="left:4px;top:5px;width:22px;height:22px"></div><svg class="a" style="left:5px;top:6px" width="20" height="20"><circle cx="7" cy="6.5" r="3.6" fill="none" stroke="#5bc0eb" stroke-width="1.6" stroke-dasharray="1.4 0.9"/><circle cx="7" cy="6.5" r="2.6" fill="none" stroke="#5bc0eb" stroke-width="1.6"/><circle cx="14" cy="9" r="2.4" fill="#d8c36a"/><circle cx="14" cy="9" r="1" fill="#2c3e50"/><circle cx="10" cy="14.2" r="3.1" fill="none" stroke="#e8e8e8" stroke-width="1.5" stroke-dasharray="1.3 0.9"/><circle cx="10" cy="14.2" r="2.2" fill="none" stroke="#e8e8e8" stroke-width="1.5"/></svg><span class="bt" style="left:29px;color:#f4f4f4">台湾排版</span></div>
<div class="btn" style="left:1781px;top:635px;background:#4f7b35"><div class="ic" style="left:4px;top:5px;width:22px;height:22px"></div><svg class="a" style="left:5px;top:6px" width="20" height="20"><circle cx="7" cy="6.5" r="3.6" fill="none" stroke="#5bc0eb" stroke-width="1.6" stroke-dasharray="1.4 0.9"/><circle cx="7" cy="6.5" r="2.6" fill="none" stroke="#5bc0eb" stroke-width="1.6"/><circle cx="14" cy="9" r="2.4" fill="#d8c36a"/><circle cx="14" cy="9" r="1" fill="#2c3e50"/><circle cx="10" cy="14.2" r="3.1" fill="none" stroke="#e8e8e8" stroke-width="1.5" stroke-dasharray="1.3 0.9"/><circle cx="10" cy="14.2" r="2.2" fill="none" stroke="#e8e8e8" stroke-width="1.5"/></svg><span class="bt" style="left:29px;color:#f4f4f4">美国排版</span></div>
<div class="btn" style="left:1567px;top:676px;background:#9a3d87"><div class="ic" style="left:4px;top:5px;width:22px;height:22px;background:#7fd3f0"></div><svg class="a" style="left:8px;top:8px" width="15" height="17"><path d="M2 4L5 1H10L13 4V16H2Z" fill="#2c3e50"/><path d="M5.5 1L7.5 9L9.5 1Z" fill="#fff"/><path d="M7 4H8L8.5 10L7.5 12L6.5 10Z" fill="#2c3e50"/></svg><span class="bt" style="left:29px;color:#f4f4f4">服装模板</span></div>
<div class="btn" style="left:1674px;top:676px;background:#13927a"><div class="ic" style="left:4px;top:5px;width:22px;height:22px"></div><svg class="a" style="left:6px;top:8px" width="18" height="16"><path d="M3 8A3 3 0 0 1 5 3A4 4 0 0 1 13 3A3 3 0 0 1 15 8Z" fill="#ecf0f1"/><path d="M9 8V11M4 11H14M4 11V13M9 11V13M14 11V13" stroke="#ddd" stroke-width="1"/><rect x="2.5" y="12.5" width="3" height="2" fill="#f39c12"/><rect x="7.5" y="12.5" width="3" height="2" fill="#e74c3c"/><rect x="12.5" y="12.5" width="3" height="2" fill="#3498db"/></svg><span class="bt" style="left:37px;color:#f4f4f4">复&nbsp;&nbsp;&nbsp;制</span></div>
<div class="btn" style="left:1781px;top:676px;background:#13927a"><div class="ic" style="left:4px;top:5px;width:22px;height:22px"></div><svg class="a" style="left:7px;top:8px" width="16" height="16"><path d="M2 2L14 14" stroke="#f1c40f" stroke-width="3"/><path d="M14 2L2 14" stroke="#ecf0f1" stroke-width="3.2"/></svg><span class="bt" style="left:37px;color:#f4f4f4">粘&nbsp;&nbsp;&nbsp;贴</span></div>
<div class="btn" style="left:1567px;top:717px;background:#ae4c6b"><div class="ic" style="left:4px;top:5px;width:22px;height:22px"></div><svg class="a" style="left:4px;top:5px" width="22" height="22"><circle cx="11" cy="8" r="3.6" fill="#f5d0b5"/><path d="M7 7A4 4 0 0 1 15 7L14 5A3 3 0 0 0 8 5Z" fill="#e67e22"/><path d="M4 20A7 6 0 0 1 18 20Z" fill="#1abc9c"/><path d="M9 14L11 19L13 14Z" fill="#fff"/></svg><span class="bt" style="left:29px;color:#f4f4f4">滤镜磨皮</span></div>
<div class="btn" style="left:1674px;top:717px;background:#bf2a55"><div class="ic" style="left:4px;top:5px;width:22px;height:22px"></div><svg class="a" style="left:4px;top:5px" width="22" height="22"><circle cx="11" cy="8" r="3.6" fill="#f5d0b5"/><path d="M7 7A4 4 0 0 1 15 7L14 5A3 3 0 0 0 8 5Z" fill="#e67e22"/><path d="M4 20A7 6 0 0 1 18 20Z" fill="#1abc9c"/><path d="M9 14L11 19L13 14Z" fill="#fff"/></svg><span class="bt" style="left:29px;color:#f4f4f4">批量磨皮</span></div>
<div class="btn" style="left:1781px;top:717px;background:#2b7a46"><div class="ic" style="left:4px;top:5px;width:22px;height:22px;background:#9fd89a"></div><svg class="a" style="left:7px;top:8px" width="16" height="16"><path d="M3 13L10 6" stroke="#2c3e50" stroke-width="3"/><circle cx="11" cy="5" r="3.5" fill="#2c3e50"/><circle cx="12.5" cy="3.5" r="1.5" fill="#9fd89a"/><circle cx="6" cy="12" r="2.5" fill="#ecf0f1"/></svg><span class="bt" style="left:29px;color:#f4f4f4">存储关闭</span></div>
<svg class="a" style="left:1600px;top:280px" width="140" height="180"><path d="M19.8 16.4L114.6 146.2L109.4 149.8L18.2 17.6Z" fill="#8b0b13"/><path d="M101 155L123.5 138.5L124 165Z" fill="#8b0b13"/></svg>
<div class="t" style="left:1224px;top:955px;height:60px;color:#fff;text-shadow:3px 3px 0 #000,2px 2px 0 #000"><span style="font-size:47px;font-weight:bold;position:relative;top:-2px">头条</span><span style="font-size:55px;margin-left:12px">@Photoshop</span><span style="font-size:49px">美图设计师</span></div>
</body></html>
